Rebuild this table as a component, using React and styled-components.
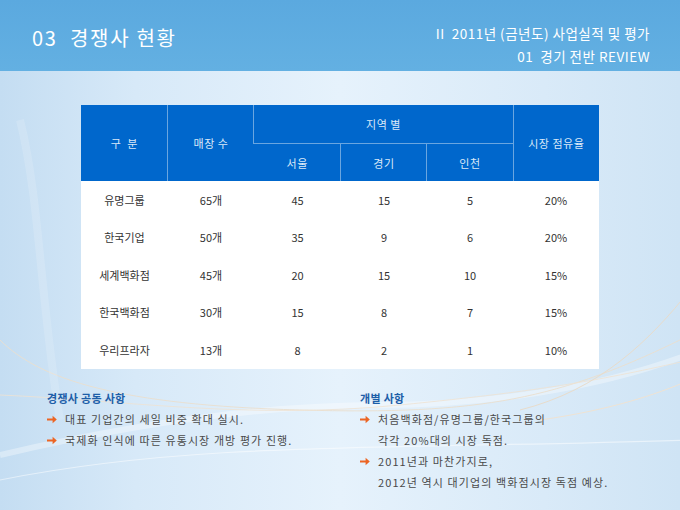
import React from "react";
import styled, { createGlobalStyle } from "styled-components";

const Global = createGlobalStyle`
  html, body { margin: 0; padding: 0; }
  body { width: 680px; height: 510px; overflow: hidden; font-family: "Noto Sans CJK KR", "Noto Sans", sans-serif; }
`;

const Page = styled.div`
  position: relative;
  width: 680px;
  height: 510px;
  overflow: hidden;
  background: linear-gradient(90deg, #c4ddf2 0%, #d7e9f8 20%, #e6f2fc 50%, #d9eaf8 80%, #cfe4f5 100%);
`;

const Swirls = styled.svg`
  position: absolute;
  left: 0;
  top: 0;
  width: 680px;
  height: 510px;
  pointer-events: none;
`;

const Content = styled.div`
  position: relative;
  display: flex;
  flex-direction: column;
`;

const HeaderBar = styled.header`
  height: 71px;
  background: linear-gradient(180deg, #5ba9df 0%, #63b0e2 100%);
  display: flex;
  justify-content: space-between;
  padding: 0 30px 0 32px;
  color: #fff;
`;

const Title = styled.h1`
  margin: 0;
  padding-top: 24px;
  font-size: 20px;
  font-weight: 400;
  line-height: 28px;
  letter-spacing: 1.7px;
  white-space: pre;
`;

const Crumbs = styled.div`
  display: flex;
  flex-direction: column;
  align-items: flex-end;
  padding-top: 25px;
  gap: 6px;
`;

const Crumb = styled.div`
  font-size: 13.5px;
  line-height: 17px;
  letter-spacing: 0.5px;
  white-space: pre;
`;

const Table = styled.table`
  margin: 34px auto 0;
  width: 518px;
  border-collapse: collapse;
  table-layout: fixed;
  background: #fff;
`;

const Th = styled.th`
  background: #0067cc;
  color: #dbe9f8;
  font-weight: 400;
  font-size: 11px;
  height: ${(p) => p.$h || 37}px;
  padding: 0;
  border-left: 1px solid #6aa6e0;
  border-top: ${(p) => (p.$sub ? "1px solid #6aa6e0" : "none")};
  letter-spacing: 0.5px;
  white-space: pre;
  &:first-child { border-left: none; }
`;

const Td = styled.td`
  color: #333;
  font-size: 11px;
  height: 37.5px;
  padding: 0;
  text-align: center;
  white-space: pre;
`;

const Notes = styled.section`
  display: grid;
  grid-template-columns: 313px 1fr;
  padding: 19px 0 0 47px;
`;

const NoteCol = styled.div`
  display: flex;
  flex-direction: column;
`;

const NoteHead = styled.div`
  color: #1d5ea8;
  font-weight: 700;
  font-size: 11px;
  line-height: 20px;
  letter-spacing: 0.3px;
  margin-bottom: 1px;
`;

const Item = styled.div`
  display: flex;
  align-items: center;
  gap: 8px;
  color: #4a4a4a;
  font-size: 11px;
  line-height: 21px;
  letter-spacing: 1.1px;
  padding-left: ${(p) => (p.$cont ? "18px" : "0")};
  white-space: pre;
`;

const Arrow = () => (
  <svg width="10" height="9" viewBox="0 0 10 9">
    <path d="M0 3.4 H5.6 V0.8 L9.8 4.5 L5.6 8.2 V5.6 H0 Z" fill="#ec6524" />
  </svg>
);

const rows = [
  ["유명그룹", "65개", "45", "15", "5", "20%"],
  ["한국기업", "50개", "35", "9", "6", "20%"],
  ["세계백화점", "45개", "20", "15", "10", "15%"],
  ["한국백화점", "30개", "15", "8", "7", "15%"],
  ["우리프라자", "13개", "8", "2", "1", "10%"],
];

export default function App() {
  return (
    <>
      <Global />
      <Page>
        <Swirls viewBox="0 0 680 510">
          <path d="M0 455 C 150 420, 280 405, 380 405 S 600 390, 700 350" stroke="#ffffff" strokeWidth="6" fill="none" opacity="0.35" />
          <path d="M0 340 C 40 380, 120 405, 300 410 S 560 400, 690 335" stroke="#eadfce" strokeWidth="1" fill="none" opacity="0.9" />
          <path d="M0 395 C 120 400, 250 420, 400 405 S 600 380, 690 360" stroke="#efe2d2" strokeWidth="1" fill="none" opacity="0.8" />
          <path d="M520 410 C 600 390, 650 340, 690 290" stroke="#e8dccb" strokeWidth="1" fill="none" />
          <path d="M540 420 C 610 410, 655 395, 690 380" stroke="#efe3d3" strokeWidth="1" fill="none" />
          <path d="M0 480 C 200 440, 400 450, 690 440" stroke="#ffffff" strokeWidth="1.2" fill="none" opacity="0.5" />
          <path d="M20 120 C 40 200, 40 300, 60 420" stroke="#ffffff" strokeWidth="8" fill="none" opacity="0.15" />
        </Swirls>
        <Content>
          <HeaderBar>
            <Title>{"03  경쟁사 현황"}</Title>
            <Crumbs>
              <Crumb>{"II  2011년 (금년도) 사업실적 및 평가"}</Crumb>
              <Crumb>{"01  경기 전반 REVIEW"}</Crumb>
            </Crumbs>
          </HeaderBar>
          <Table>
            <colgroup>
              <col style={{ width: 87 }} />
              <col style={{ width: 86 }} />
              <col style={{ width: 87 }} />
              <col style={{ width: 86 }} />
              <col style={{ width: 86 }} />
              <col style={{ width: 86 }} />
            </colgroup>
            <thead>
              <tr>
                <Th rowSpan={2}>{"구  분"}</Th>
                <Th rowSpan={2}>{"매장 수"}</Th>
                <Th colSpan={3} $h={38}>{"지역 별"}</Th>
                <Th rowSpan={2}>{"시장 점유율"}</Th>
              </tr>
              <tr>
                <Th $sub>서울</Th>
                <Th $sub>경기</Th>
                <Th $sub>인천</Th>
              </tr>
            </thead>
            <tbody>
              {rows.map((r) => (
                <tr key={r[0]}>
                  {r.map((c, i) => (
                    <Td key={i}>{c}</Td>
                  ))}
                </tr>
              ))}
            </tbody>
          </Table>
          <Notes>
            <NoteCol>
              <NoteHead>경쟁사 공동 사항</NoteHead>
              <Item><Arrow />{"대표 기업간의 세일 비중 확대 실시."}</Item>
              <Item><Arrow />{"국제화 인식에 따른 유통시장 개방 평가 진행."}</Item>
            </NoteCol>
            <NoteCol>
              <NoteHead>개별 사항</NoteHead>
              <Item><Arrow />{"처음백화점/유명그룹/한국그룹의"}</Item>
              <Item $cont>{"각각 20%대의 시장 독점."}</Item>
              <Item><Arrow />{"2011년과 마찬가지로,"}</Item>
              <Item $cont>{"2012년 역시 대기업의 백화점시장 독점 예상."}</Item>
            </NoteCol>
          </Notes>
        </Content>
      </Page>
    </>
  );
}
